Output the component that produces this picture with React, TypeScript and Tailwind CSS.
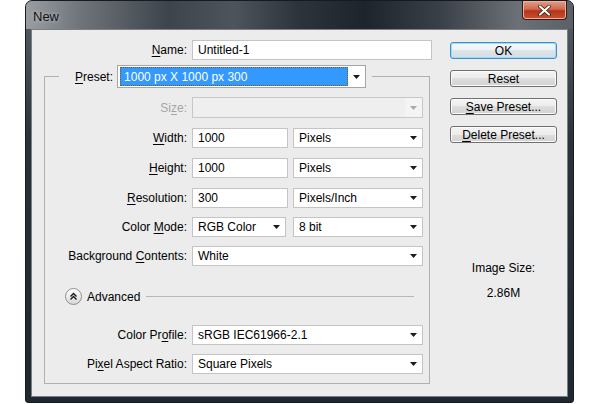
import React from "react";

function Mn({ children }: { children: React.ReactNode }) {
  return <span className="underline underline-offset-[2px] decoration-[1px]">{children}</span>;
}

function Arrow({ muted }: { muted?: boolean }) {
  return (
    <svg width="7" height="4" viewBox="0 0 7 4" className="shrink-0">
      <path d="M0 0h7L3.5 4z" fill={muted ? "#a9a9a9" : "#1b1b1b"} />
    </svg>
  );
}

function TextBox({ value, w }: { value: string; w: string }) {
  return (
    <div className={`${w} h-[20px] flex items-center border border-[#c4c4c4] bg-white pl-[5px] text-black`}>
      {value}
    </div>
  );
}

function Select({ value, w }: { value: string; w: string }) {
  return (
    <div className={`${w} h-[20px] flex items-center justify-between border border-[#c4c4c4] bg-white pl-[5px] pr-[5px] text-black`}>
      <span>{value}</span>
      <Arrow />
    </div>
  );
}

interface RowProps {
  label: React.ReactNode;
  children: React.ReactNode;
  className?: string;
  muted?: boolean;
}
function Row({ label, children, className, muted }: RowProps) {
  return (
    <div className={`flex items-center ${className ?? ""}`}>
      <div className={`w-[142px] shrink-0 text-right ${muted ? "text-[#a6a6a6]" : "text-black"}`}>{label}</div>
      <div className="ml-[5px] flex items-center">{children}</div>
    </div>
  );
}

function Btn({ children, primary }: { children: React.ReactNode; primary?: boolean }) {
  return (
    <div
      className={`h-[17px] flex items-center justify-center rounded-[3px] border text-black ${
        primary
          ? "border-[#3c8fc8] bg-[linear-gradient(180deg,#f4f8fa_0%,#ecf1f4_50%,#dde5ea_50%,#d2dce2_100%)] shadow-[inset_0_0_0_1px_#9fdcf7]"
          : "border-[#707070] bg-[linear-gradient(180deg,#f4f4f4_0%,#ececec_50%,#dedede_50%,#d2d2d2_100%)] shadow-[inset_0_0_0_1px_#fbfbfb]"
      }`}
    >
      {children}
    </div>
  );
}

function AdvancedIcon() {
  return (
    <div className="w-[17px] h-[17px] rounded-full border border-[#8e8e8e] bg-[linear-gradient(180deg,#ffffff_0%,#e9e9e9_60%,#d6d6d6_100%)] flex items-center justify-center">
      <svg width="9" height="9" viewBox="0 0 9 9">
        <path d="M1.5 4.5L4.5 1.5L7.5 4.5M1.5 7.5L4.5 4.5L7.5 7.5" fill="none" stroke="#1a1a1a" strokeWidth="1.4" />
      </svg>
    </div>
  );
}

export default function App() {
  return (
    <div className="w-[600px] h-[404px] bg-white font-['Liberation_Sans',Arial,sans-serif] text-[12px] leading-none">
      <div className="ml-[25px] w-[549px] h-[403px] flex flex-col rounded-t-[7px] rounded-b-[3px] border border-[#151b22] bg-[linear-gradient(180deg,#5a6067_0%,#2a3139_35%,#1f2730_100%)] overflow-hidden">
        {/* title bar */}
        <div className="h-[28px] shrink-0 flex items-start justify-between bg-[linear-gradient(90deg,#9a9ea3_0%,#6f747a_10%,#3d444b_26%,#4d545b_38%,#2c333b_50%,#1d242c_62%,#3b4148_76%,#6c7177_90%,#5b6066_100%)]">
          <div className="pl-[7px] pt-[9px] text-[13px] text-[#111] [text-shadow:0_0_4px_rgba(255,255,255,0.55)]">New</div>
          <div className="mr-[6px] w-[45px] h-[19px] rounded-b-[4px] border border-t-0 border-[#3b1a14] bg-[linear-gradient(180deg,#e0a08d_0%,#cf6a4f_45%,#b63318_55%,#c8522f_100%)] shadow-[inset_0_0_0_1px_#e8b3a3] flex items-center justify-center">
            <svg width="13" height="11" viewBox="0 0 13 11">
              <path d="M2 1.5L11 9.5M11 1.5L2 9.5" stroke="#3a1208" strokeWidth="3.6" strokeLinecap="round" />
              <path d="M2 1.5L11 9.5M11 1.5L2 9.5" stroke="#ffffff" strokeWidth="2.2" strokeLinecap="round" />
            </svg>
          </div>
        </div>

        {/* client area */}
        <div className="mx-[5px] h-[368px] shrink-0 border border-[#7b8087] bg-[#ececec] flex">
          {/* left column */}
          <div className="pl-[12px] pt-[10px] w-[401px]">
            <div className="flex items-center">
              <div className="w-[143px] text-right">
                <Mn>N</Mn>ame:
              </div>
              <div className="ml-[5px]">
                <TextBox value="Untitled-1" w="w-[240px]" />
              </div>
            </div>

            <fieldset className="mt-[5px] w-[386px] border border-[#b0b0b0] pb-[9px]">
              <legend className="ml-[14px] flex items-center">
                <span className="pl-[16px] pr-[4px]">
                  <Mn>P</Mn>reset:
                </span>
                <div className="w-[249px] h-[23px] flex items-center border border-[#a5a5a5] bg-white pl-[2px]">
                  <div className="flex-1 h-[19px] flex items-center bg-[#3399ff] border border-dotted border-[#7a5a20] pl-[3px] text-white">
                    1000 px X 1000 px 300
                  </div>
                  <div className="w-[17px] flex items-center justify-center">
                    <Arrow />
                  </div>
                </div>
                <span className="w-[6px]" />
              </legend>

              <Row
                className="mt-[9px]"
                muted
                label={
                  <>
                    Si<Mn>z</Mn>e:
                  </>
                }
              >
                <div className="w-[231px] h-[21px] flex items-center justify-end border border-[#c8c8c8] bg-[#efefef]">
                  <div className="w-[17px] h-full flex items-center justify-center bg-[#f4f4f4]">
                    <Arrow muted />
                  </div>
                </div>
              </Row>

              <Row
                className="mt-[10px]"
                label={
                  <>
                    <Mn>W</Mn>idth:
                  </>
                }
              >
                <TextBox value="1000" w="w-[96px]" />
                <div className="ml-[5px]">
                  <Select value="Pixels" w="w-[130px]" />
                </div>
              </Row>

              <Row
                className="mt-[10px]"
                label={
                  <>
                    <Mn>H</Mn>eight:
                  </>
                }
              >
                <TextBox value="1000" w="w-[96px]" />
                <div className="ml-[5px]">
                  <Select value="Pixels" w="w-[130px]" />
                </div>
              </Row>

              <Row
                className="mt-[10px]"
                label={
                  <>
                    <Mn>R</Mn>esolution:
                  </>
                }
              >
                <TextBox value="300" w="w-[96px]" />
                <div className="ml-[5px]">
                  <Select value="Pixels/Inch" w="w-[130px]" />
                </div>
              </Row>

              <Row
                className="mt-[9px]"
                label={
                  <>
                    Color <Mn>M</Mn>ode:
                  </>
                }
              >
                <Select value="RGB Color" w="w-[94px]" />
                <div className="ml-[7px]">
                  <Select value="8 bit" w="w-[130px]" />
                </div>
              </Row>

              <Row
                className="mt-[9px]"
                label={
                  <>
                    Background <Mn>C</Mn>ontents:
                  </>
                }
              >
                <Select value="White" w="w-[231px]" />
              </Row>

              <div className="mt-[22px] ml-[20px] mr-[15px] flex items-center">
                <AdvancedIcon />
                <span className="ml-[5px] text-black">Advanced</span>
                <div className="ml-[6px] flex-1 h-px bg-[#b8b8b8]" />
              </div>

              <Row
                className="mt-[20px]"
                label={
                  <>
                    Color Pr<Mn>o</Mn>file:
                  </>
                }
              >
                <Select value="sRGB IEC61966-2.1" w="w-[231px]" />
              </Row>

              <Row
                className="mt-[9px]"
                label={
                  <>
                    Pi<Mn>x</Mn>el Aspect Ratio:
                  </>
                }
              >
                <Select value="Square Pixels" w="w-[231px]" />
              </Row>
            </fieldset>
          </div>

          {/* right column */}
          <div className="ml-[17px] w-[107px] pt-[12px] flex flex-col">
            <Btn primary>OK</Btn>
            <div className="mt-[11px]">
              <Btn>Reset</Btn>
            </div>
            <div className="mt-[11px]">
              <Btn>
                <span>
                  <Mn>S</Mn>ave Preset...
                </span>
              </Btn>
            </div>
            <div className="mt-[11px]">
              <Btn>
                <span>
                  <Mn>D</Mn>elete Preset...
                </span>
              </Btn>
            </div>
            <div className="mt-[119px] text-center text-black">Image Size:</div>
            <div className="mt-[13px] text-center text-black">2.86M</div>
          </div>
        </div>
      </div>
    </div>
  );
}
